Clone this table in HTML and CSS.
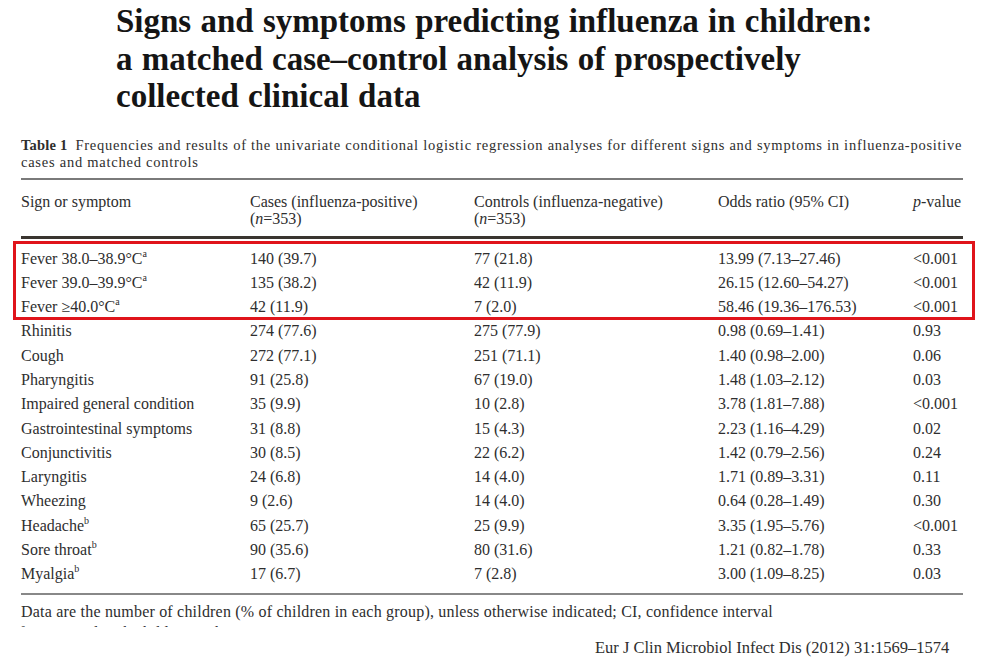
FILE: index.html
```html
<!DOCTYPE html>
<html>
<head>
<meta charset="utf-8">
<link rel="stylesheet" href="styles.css">
</head>
<body>
<div class="page">
  <h1 class="title">Signs and symptoms predicting influenza in children:<br>a matched case–control analysis of prospectively<br>collected clinical data</h1>
  <section class="table-block">
    <p class="caption"><b>Table 1</b>&ensp;Frequencies and results of the univariate conditional logistic regression analyses for different signs and symptoms in influenza-positive<br>cases and matched controls</p>
    <div class="rule thin"></div>
    <div class="row head">
      <div>Sign or symptom</div>
      <div>Cases (influenza-positive)<br>(<i>n</i>=353)</div>
      <div>Controls (influenza-negative)<br>(<i>n</i>=353)</div>
      <div>Odds ratio (95% CI)</div>
      <div><i>p</i>-value</div>
    </div>
    <div class="rule thick"></div>
    <div class="highlight">
      <div class="row"><div>Fever 38.0–38.9°C<sup>a</sup></div><div>140 (39.7)</div><div>77 (21.8)</div><div>13.99 (7.13–27.46)</div><div>&lt;0.001</div></div>
      <div class="row"><div>Fever 39.0–39.9°C<sup>a</sup></div><div>135 (38.2)</div><div>42 (11.9)</div><div>26.15 (12.60–54.27)</div><div>&lt;0.001</div></div>
      <div class="row"><div>Fever ≥40.0°C<sup>a</sup></div><div>42 (11.9)</div><div>7 (2.0)</div><div>58.46 (19.36–176.53)</div><div>&lt;0.001</div></div>
    </div>
    <div class="row"><div>Rhinitis</div><div>274 (77.6)</div><div>275 (77.9)</div><div>0.98 (0.69–1.41)</div><div>0.93</div></div>
    <div class="row"><div>Cough</div><div>272 (77.1)</div><div>251 (71.1)</div><div>1.40 (0.98–2.00)</div><div>0.06</div></div>
    <div class="row"><div>Pharyngitis</div><div>91 (25.8)</div><div>67 (19.0)</div><div>1.48 (1.03–2.12)</div><div>0.03</div></div>
    <div class="row"><div>Impaired general condition</div><div>35 (9.9)</div><div>10 (2.8)</div><div>3.78 (1.81–7.88)</div><div>&lt;0.001</div></div>
    <div class="row"><div>Gastrointestinal symptoms</div><div>31 (8.8)</div><div>15 (4.3)</div><div>2.23 (1.16–4.29)</div><div>0.02</div></div>
    <div class="row"><div>Conjunctivitis</div><div>30 (8.5)</div><div>22 (6.2)</div><div>1.42 (0.79–2.56)</div><div>0.24</div></div>
    <div class="row"><div>Laryngitis</div><div>24 (6.8)</div><div>14 (4.0)</div><div>1.71 (0.89–3.31)</div><div>0.11</div></div>
    <div class="row"><div>Wheezing</div><div>9 (2.6)</div><div>14 (4.0)</div><div>0.64 (0.28–1.49)</div><div>0.30</div></div>
    <div class="row"><div>Headache<sup>b</sup></div><div>65 (25.7)</div><div>25 (9.9)</div><div>3.35 (1.95–5.76)</div><div>&lt;0.001</div></div>
    <div class="row"><div>Sore throat<sup>b</sup></div><div>90 (35.6)</div><div>80 (31.6)</div><div>1.21 (0.82–1.78)</div><div>0.33</div></div>
    <div class="row"><div>Myalgia<sup>b</sup></div><div>17 (6.7)</div><div>7 (2.8)</div><div>3.00 (1.09–8.25)</div><div>0.03</div></div>
    <div class="rule foot"></div>
    <p class="note">Data are the number of children (% of children in each group), unless otherwise indicated; CI, confidence interval</p>
    <div class="clip"><p class="note"><sup>a</sup> Compared with children with temperature &lt;38.0°C</p></div>
  </section>
  <p class="cite">Eur J Clin Microbiol Infect Dis (2012) 31:1569–1574</p>
</div>
</body>
</html>
```

FILE: styles.css
```css
html, body {
  margin: 0;
  padding: 0;
  background: #fff;
}
.page {
  width: 982px;
  height: 663px;
  overflow: hidden;
  font-family: "Liberation Serif", "Times New Roman", serif;
  color: #2e2e2e;
}
.title {
  margin: 0;
  padding: 3px 0 0 116px;
  font-size: 33px;
  line-height: 37.5px;
  font-weight: bold;
  color: #151515;
  letter-spacing: 0;
  word-spacing: 1px;
}
.table-block {
  margin: 21px 19px 0 21px;
}
.caption {
  margin: 0;
  font-size: 14.5px;
  line-height: 17px;
  letter-spacing: 0.75px;
  white-space: nowrap;
}
.caption b {
  font-weight: bold;
  letter-spacing: 0.2px;
}
.rule {
  background: #7a7a7a;
}
.rule.thin {
  height: 2px;
  margin-top: 7px;
}
.rule.thick {
  height: 3px;
  background: #3a3530;
  margin-top: 9px;
  margin-bottom: 8px;
}
.rule.foot {
  height: 2px;
  background: #888;
  margin-top: 6px;
}
.row {
  display: grid;
  grid-template-columns: 229px 224px 244px 195px auto;
  font-size: 16px;
  line-height: 24.3px;
  white-space: nowrap;
}
.row.head {
  line-height: 17px;
  margin-top: 13px;
}
sup {
  font-size: 10px;
  line-height: 0;
  vertical-align: 7px;
}
.highlight {
  position: relative;
}
.highlight::before {
  content: "";
  position: absolute;
  top: -6px;
  bottom: -1px;
  left: -8px;
  right: -12px;
  border: 3px solid #e0141b;
  pointer-events: none;
}
.note {
  margin: 8px 0 0;
  font-size: 16px;
  line-height: 18px;
  letter-spacing: 0.2px;
  white-space: nowrap;
}
.clip {
  height: 3px;
  margin-top: 3px;
  overflow: hidden;
}
.clip .note {
  margin-top: 0;
}
.cite {
  margin: 12px 0 0;
  padding-left: 595px;
  font-size: 16.5px;
  line-height: 18px;
  white-space: nowrap;
}
```
